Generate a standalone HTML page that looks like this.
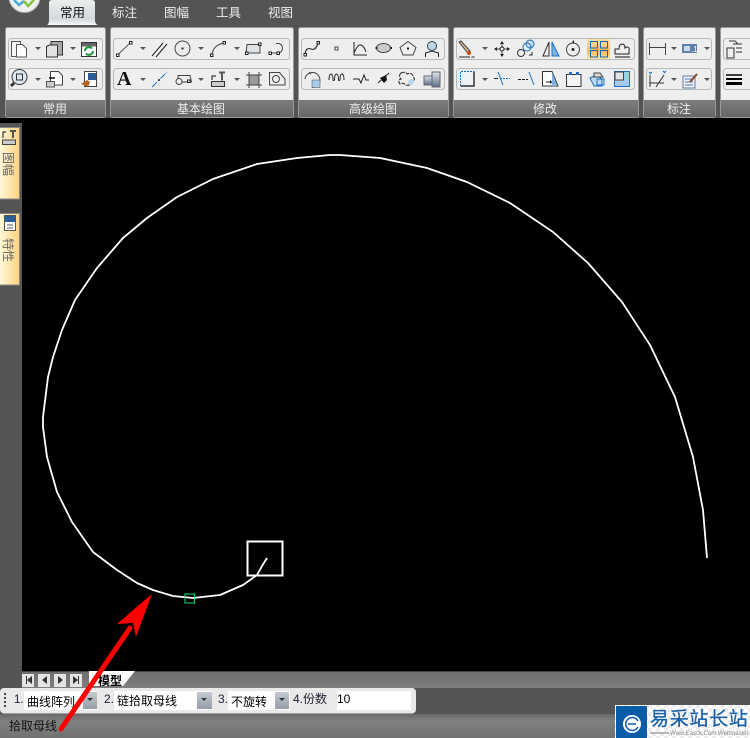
<!DOCTYPE html>
<html><head><meta charset="utf-8"><style>
html,body{margin:0;padding:0;background:#000}
svg{display:block}
text{font-family:"Liberation Sans","WenQuanYi Zen Hei","Noto Sans CJK SC",sans-serif}
.g{fill:#eee;stroke:#b4bab8;stroke-width:1}
.n{fill:#555}
</style></head><body>
<svg width="750" height="738" viewBox="0 0 750 738" xmlns="http://www.w3.org/2000/svg">
<defs>
<linearGradient id="foot" x1="0" y1="0" x2="0" y2="1"><stop offset="0" stop-color="#7d7d7d"/><stop offset="1" stop-color="#666"/></linearGradient>
<linearGradient id="stat" x1="0" y1="0" x2="0" y2="1"><stop offset="0" stop-color="#6a6a6a"/><stop offset=".3" stop-color="#808080"/><stop offset="1" stop-color="#727272"/></linearGradient>
<linearGradient id="tab" x1="0" y1="0" x2="0" y2="1"><stop offset="0" stop-color="#eceeee"/><stop offset=".75" stop-color="#d4d9dc"/><stop offset="1" stop-color="#f6f6f6"/></linearGradient>
<linearGradient id="side" x1="0" y1="0" x2="1" y2="0"><stop offset="0" stop-color="#fff8d8"/><stop offset="1" stop-color="#fdd27e"/></linearGradient>
<linearGradient id="hot" x1="0" y1="0" x2="0" y2="1"><stop offset="0" stop-color="#fde0a6"/><stop offset=".6" stop-color="#fcb858"/><stop offset="1" stop-color="#fde79c"/></linearGradient>
<linearGradient id="dd" x1="0" y1="0" x2="0" y2="1"><stop offset="0" stop-color="#c4c9d2"/><stop offset="1" stop-color="#969da8"/></linearGradient>
<linearGradient id="tabbar" x1="0" y1="0" x2="0" y2="1"><stop offset="0" stop-color="#6e6e6e"/><stop offset="1" stop-color="#7e7e7e"/></linearGradient>
<linearGradient id="cyl" x1="0" y1="0" x2="0" y2="1"><stop offset="0" stop-color="#dde3ea"/><stop offset="1" stop-color="#5f6f88"/></linearGradient>
<pattern id="chk" width="8" height="8" patternUnits="userSpaceOnUse"><rect width="8" height="8" fill="#fff"/><rect width="4" height="4" fill="#ececec"/><rect x="4" y="4" width="4" height="4" fill="#ececec"/></pattern>
</defs>

<!-- top -->
<rect width="750" height="123" fill="#545454"/>
<rect x="0" y="118" width="750" height="5" fill="#000"/>
<rect x="0" y="123" width="22" height="565" fill="#555"/>

<!-- logo -->
<circle cx="24.500" cy="-3" r="15.500" fill="#eef0ee" stroke="#aaa"/>
<path d="M14 0 L19 5 L24 1" fill="none" stroke="#4aa8d8" stroke-width="2.500"/>
<path d="M24 1 L28 6 L34 0" fill="none" stroke="#86c440" stroke-width="2.500"/>

<!-- tabs -->
<path d="M47 25 Q49 24 49 20 L49 3 Q49 0 52 0 L92 0 Q95 0 95 3 L95 20 Q95 24 98 25Z" fill="url(#tab)"/>
<g font-size="12.500">
<text x="60" y="17" fill="#111">常用</text>
<text x="112" y="17" fill="#eee">标注</text>
<text x="164" y="17" fill="#eee">图幅</text>
<text x="216" y="17" fill="#eee">工具</text>
<text x="268" y="17" fill="#eee">视图</text>
</g>

<!-- panels -->
<g>
<rect x="5.500" y="27.500" width="100" height="90" rx="2" fill="#eee" stroke="#999"/>
<rect x="6" y="100" width="99" height="17" fill="url(#foot)"/>
<rect x="110.500" y="27.500" width="183" height="90" rx="2" fill="#eee" stroke="#999"/>
<rect x="111" y="100" width="182" height="17" fill="url(#foot)"/>
<rect x="298.500" y="27.500" width="150" height="90" rx="2" fill="#eee" stroke="#999"/>
<rect x="299" y="100" width="149" height="17" fill="url(#foot)"/>
<rect x="453.500" y="27.500" width="185" height="90" rx="2" fill="#eee" stroke="#999"/>
<rect x="454" y="100" width="184" height="17" fill="url(#foot)"/>
<rect x="643.500" y="27.500" width="72" height="90" rx="2" fill="#eee" stroke="#999"/>
<rect x="644" y="100" width="71" height="17" fill="url(#foot)"/>
<rect x="720.500" y="27.500" width="40" height="90" rx="2" fill="#eee" stroke="#999"/>
<rect x="721" y="100" width="40" height="17" fill="url(#foot)"/>
</g>
<g font-size="12" fill="#eee" text-anchor="middle">
<text x="55" y="113">常用</text>
<text x="201" y="113">基本绘图</text>
<text x="373" y="113">高级绘图</text>
<text x="545" y="113">修改</text>
<text x="679" y="113">标注</text>
</g>

<!-- button groups -->
<rect class="g" x="8.500" y="38.500" width="94" height="21" rx="3"/>
<rect class="g" x="8.500" y="68.500" width="94" height="21" rx="3"/>
<rect class="g" x="113.500" y="38.500" width="176" height="21" rx="3"/>
<rect class="g" x="113.500" y="68.500" width="176" height="21" rx="3"/>
<rect class="g" x="301.500" y="38.500" width="143" height="21" rx="3"/>
<rect class="g" x="301.500" y="68.500" width="143" height="21" rx="3"/>
<rect class="g" x="456.500" y="38.500" width="178" height="21" rx="3"/>
<rect class="g" x="456.500" y="68.500" width="178" height="21" rx="3"/>
<rect class="g" x="646.500" y="38.500" width="65" height="21" rx="3"/>
<rect class="g" x="646.500" y="68.500" width="65" height="21" rx="3"/>
<rect class="g" x="723.500" y="38.500" width="40" height="21" rx="3"/>
<rect class="g" x="723.500" y="68.500" width="40" height="21" rx="3"/>

<!-- dropdown arrows -->
<g class="n">
<path d="M35 47h6l-3 3z"/><path d="M70 47h6l-3 3z"/>
<path d="M35 78h6l-3 3z"/><path d="M70 78h6l-3 3z"/>
<path d="M140 47h6l-3 3z"/><path d="M198 47h6l-3 3z"/><path d="M234 47h6l-3 3z"/>
<path d="M140 78h6l-3 3z"/><path d="M198 78h6l-3 3z"/><path d="M234 78h6l-3 3z"/>
<path d="M482 47h6l-3 3z"/><path d="M482 78h6l-3 3z"/>
<path d="M671 47h6l-3 3z"/><path d="M704 47h6l-3 3z"/>
<path d="M671 78h6l-3 3z"/><path d="M704 78h6l-3 3z"/>
</g>

<!-- group 1 icons -->
<path d="M11.500 41.500h9v15h-9z" fill="#f4f4f4" stroke="#555"/><path d="M16.500 44.500h6l4 4v8.500h-10z" fill="#fff" stroke="#555"/>
<path d="M46.500 46.500l4-2h7v12.500h-11z" fill="#e2e2e2" stroke="#333"/><path d="M51 41.500h11.500v13.500h-5v-10h-6.500z" fill="#a8a8a8" stroke="#333"/>
<rect x="81.500" y="42.500" width="15" height="14" fill="#fff" stroke="#333"/><rect x="82" y="43" width="14" height="3.500" fill="#666"/><path d="M85 51a4 4 0 0 1 7-2.500M93 51a4 4 0 0 1-7 2.500" fill="none" stroke="#1e9a3c" stroke-width="2"/>
<circle cx="19.500" cy="77" r="7.500" fill="#dfe8ee" stroke="#333"/><rect x="16.500" y="74" width="6" height="6" fill="none" stroke="#333"/><path d="M14 83l-3 3" stroke="#333" stroke-width="3"/>
<path d="M50.500 71.500h8l4 4v9.500h-12z" fill="#fff" stroke="#444"/><rect x="46.500" y="81.500" width="8" height="5.500" fill="#ccc" stroke="#555"/><path d="M49 78h6" stroke="#111" stroke-width="1.500"/>
<rect x="84.500" y="71.500" width="12" height="15" fill="#fff" stroke="#444"/><rect x="88" y="73" width="8" height="7" fill="#2b5c9c"/><path d="M81 84l6-4 3 2-2 5z" fill="#b4641c"/>

<!-- group 2 row 1 -->
<path d="M118 54.500L130 43" stroke="#555" fill="none"/><rect x="116.500" y="54" width="2.500" height="2.500" fill="#fff" stroke="#222"/><rect x="129.500" y="41.500" width="2.500" height="2.500" fill="#fff" stroke="#222"/>
<path d="M152 56L163 43M156 57L167 44" stroke="#222" fill="none"/>
<circle cx="182.500" cy="48.500" r="7.500" fill="#eee" stroke="#444"/><rect x="181.500" y="47.500" width="2" height="2" fill="#222"/>
<path d="M212 55Q213 45 224 43" stroke="#444" fill="none"/><rect x="210.500" y="54" width="2.500" height="2.500" fill="#fff" stroke="#222"/><rect x="223" y="41.500" width="2.500" height="2.500" fill="#fff" stroke="#222"/>
<path d="M247 44.500h13v8.500h-14z" fill="#dfe3e6" stroke="#444"/><rect x="258.500" y="43" width="2.500" height="2.500" fill="#fff" stroke="#222"/><rect x="245.500" y="52" width="2.500" height="2.500" fill="#fff" stroke="#222"/>
<path d="M270 53h9a5 5 0 0 0 0-9.500h-3" fill="none" stroke="#444"/><rect x="269" y="52" width="2.500" height="2.500" fill="#fff" stroke="#222"/><rect x="277" y="52" width="2.500" height="2.500" fill="#fff" stroke="#222"/>
<!-- row 2 -->
<text x="117" y="85" font-size="20" font-weight="bold" fill="#111" style="font-family:'Liberation Serif',serif">A</text>
<path d="M152 87L167 72" stroke="#1a6fc0" fill="none" stroke-dasharray="7 1.500 2 1.500"/><circle cx="159" cy="80" r="1" fill="#222"/>
<path d="M178 75.500h12l1.500 6.500h-13z" fill="#eee" stroke="#444"/><circle cx="179" cy="81.500" r="3" fill="#eee" stroke="#444"/><rect x="187.500" y="80" width="2.500" height="2.500" fill="#fff" stroke="#222"/>
<rect x="211.500" y="81.500" width="13" height="5" fill="#ccc" stroke="#333"/><path d="M212 80v-4h4" fill="none" stroke="#111"/><path d="M219 72.500h6M222 72.500v8" stroke="#555" stroke-width="2"/>
<rect x="249" y="75" width="10" height="10" fill="#999" stroke="#333"/><path d="M246 75h16M246 85h16M249 72v16M259 72v16" stroke="#444" fill="none"/>
<path d="M269.500 72.500h10l5.500 6.500v6h-15.500z" fill="#eee" stroke="#444"/><circle cx="276" cy="79" r="3.500" fill="none" stroke="#444"/>

<!-- group 3 -->
<path d="M305 54Q306 47 311 49T318 43" fill="none" stroke="#333" stroke-width="1.200"/><rect x="304" y="53.500" width="2.500" height="2.500" fill="#fff" stroke="#222"/><rect x="317" y="41.500" width="2.500" height="2.500" fill="#fff" stroke="#222"/>
<rect x="335" y="47" width="3" height="3" fill="#fff" stroke="#444"/>
<path d="M354 42v13h13M354 53q4-9 7-8t5 7" fill="none" stroke="#222"/>
<ellipse cx="383.500" cy="48" rx="7" ry="4.500" fill="#ccc" stroke="#444"/><rect x="375.500" y="47" width="2" height="2" fill="#222"/><rect x="390" y="47" width="2" height="2" fill="#222"/>
<path d="M408 41.500L416 47.500L413 55L403 55L400 47.500Z" fill="#eee" stroke="#444"/><rect x="407" y="47.500" width="2" height="2" fill="#222"/>
<circle cx="432" cy="46" r="4.500" fill="#b8d8ee" stroke="#444"/><path d="M425.500 57v-4l6.500-2 6.500 2v4" fill="none" stroke="#222"/>
<path d="M305 79a7.500 7.500 0 1 1 7.500 8.500" fill="none" stroke="#444"/><rect x="312" y="80" width="8" height="7.500" fill="#a8cce8" stroke="#444" stroke-width=".5"/><path d="M309 72l2 2" stroke="#444"/>
<path d="M329 80q0-6 2-6t2 6q0 1 1.500 0q0-6 2-6t2 6q0 1 1.500 0q0-6 2-6t2 6" fill="none" stroke="#222"/>
<path d="M353 79h6l2 4 3-8 2 5h3" fill="none" stroke="#222"/>
<path d="M378 83l11-10" stroke="#222"/><path d="M380 78l6-3 1 5-3 3z" fill="#111"/>
<path d="M401 73q4-2 6 1q5-2 6 2q3 4-1 6q-1 4-6 3q-3-3-6-1q-3-4 1-5q-3-3 0-6z" fill="none" stroke="#222" stroke-dasharray="4 1"/><circle cx="411" cy="82" r="3" fill="#b8d8ee"/>
<rect x="424" y="76" width="8" height="9" fill="url(#cyl)" stroke="#667"/><rect x="432" y="72" width="8" height="15" fill="url(#cyl)" stroke="#667"/>

<!-- group 4 -->
<path d="M459 42l2-1 9 10 -1.500 3z" fill="#d4b890" stroke="#444"/><circle cx="469" cy="53" r="2" fill="#c84a10"/><path d="M459 57h11M471.500 57h3" stroke="#222"/>
<path d="M502 42v14M495 49h14" stroke="#444" fill="none"/><path d="M500 44l2-3 2 3zM500 54l2 3 2-3zM497 47l-3 2 3 2zM507 47l3 2-3 2z" fill="#222"/><circle cx="502" cy="49" r="2" fill="#eee" stroke="#222"/>
<circle cx="530" cy="44" r="4" fill="#cde" stroke="#1a6fc0"/><circle cx="527" cy="47" r="4" fill="none" stroke="#1a6fc0"/><circle cx="521" cy="53" r="3.500" fill="#eee" stroke="#333"/><path d="M529 55h3v-3" fill="none" stroke="#222"/>
<path d="M549 42v14h-6z" fill="none" stroke="#333"/><path d="M552 42v14h7z" fill="#7fb4e2" stroke="#1a6fc0"/>
<circle cx="573" cy="49.500" r="6.500" fill="#eee" stroke="#444"/><circle cx="573" cy="49.500" r="1.500" fill="#222"/><path d="M572 42l2-2v4z" fill="#222"/>
<rect x="587" y="39" width="23" height="20" fill="url(#hot)"/><g fill="none" stroke="#1565b8"><rect x="590.500" y="41.500" width="7" height="6.500"/><rect x="600.500" y="41.500" width="7" height="6.500"/><rect x="590.500" y="50.500" width="7" height="6.500"/><rect x="600.500" y="50.500" width="7" height="6.500"/></g>
<path d="M615 54h14v-3q1-4-2-4-1 0-2 1 0-4-3-4t-3 5h-4z" fill="#eee" stroke="#222"/><path d="M615 57h15" stroke="#111"/>

<path d="M460.500 71.500h13.500v14.500h-13.500z" fill="#eef2f4"/><path d="M474 71.500v14.500h-13.500" fill="none" stroke="#333" stroke-width="1.500"/><path d="M460.500 86V71.500H474" fill="none" stroke="#1a6fc0" stroke-dasharray="2 1"/>
<path d="M494 78.500h4" stroke="#222"/><path d="M500 78.500h10" stroke="#1a6fc0" stroke-dasharray="2 1"/><path d="M498 72l5 13" stroke="#1a6fc0" fill="none"/>
<path d="M518 79.500h10" stroke="#222" stroke-dasharray="3 1"/><path d="M529 72l5 13" stroke="#1a6fc0"/>
<path d="M542.500 71.500h9.500l6 14.500h-15.500z" fill="#fff" stroke="#333"/><path d="M552 72l5.500 14h-5.500z" fill="#7fb4e2"/><path d="M546 82h6" stroke="#111"/><path d="M550 80l2 2-2 2z" fill="#111"/>
<rect x="566.500" y="74.500" width="14.500" height="12" fill="#f4f4f4" stroke="#333"/><rect x="569" y="72" width="3" height="3" fill="#1a6fc0"/><rect x="576" y="72" width="3" height="3" fill="#1a6fc0"/>
<path d="M590 78l4-2h4l4 3v7h-8z" fill="#bcd8ee" stroke="#1a6fc0"/><path d="M594 73h6l3 4h-9z" fill="#ddd" stroke="#444"/><rect x="597" y="79" width="7" height="6" fill="none" stroke="#1a6fc0"/>
<rect x="614.500" y="71.500" width="15" height="15" fill="#a8cce8" stroke="#1a6fc0"/><rect x="615" y="72" width="8.500" height="8" fill="#e4e4e4" stroke="#444"/>

<!-- group 5 -->
<path d="M649.500 43v12M665.500 43v12M650 47.500h15" stroke="#444" fill="none"/>
<rect x="682" y="44" width="15" height="9" fill="#5f7fa8"/><rect x="684" y="46" width="6" height="5" fill="#cdd8e8"/><text x="691" y="52" font-size="8" fill="#fff">.1</text>
<path d="M650 87V75M656 87l8-12M649 83h15" fill="none" stroke="#333"/><path d="M649 72l2 2M652 72l-2 2M663 71l2 2M666 71l-2 2" stroke="#1a6fc0"/>
<rect x="683" y="76" width="12" height="12" fill="#eef" stroke="#5f7f9f"/><path d="M685 79h8M685 82h8M685 85h8" stroke="#5f7f9f"/><path d="M690 82l7-8" stroke="#8a4a20" stroke-width="2"/>

<!-- group 6 -->
<rect x="727" y="48" width="7" height="10" fill="#eee" stroke="#333"/><path d="M733 44h9M736 48h6M736 52h6M729 41h6l3 3" stroke="#333" fill="none"/>
<path d="M726 75h16" stroke="#000" stroke-width="1.500"/><path d="M726 79h16" stroke="#000" stroke-width="2"/><path d="M726 83.500h16" stroke="#000" stroke-width="3"/>

<!-- side tabs -->
<rect x="0" y="127" width="19.500" height="72" fill="url(#side)"/><path d="M0 127.500h19.500v71.500H0" fill="none" stroke="#888"/>
<rect x="0" y="213" width="19.500" height="72" fill="url(#side)"/><path d="M0 213.500h19.500v71.500H0" fill="none" stroke="#888"/>
<rect x="2.500" y="140" width="13" height="4.500" fill="#ccc" stroke="#444"/><path d="M3 138v-6h3" fill="none" stroke="#111"/><path d="M10 131h6M13 131v7" stroke="#555" stroke-width="2"/>
<rect x="4.500" y="215.500" width="11" height="15" fill="#fff" stroke="#555"/><rect x="5" y="216" width="10" height="6" fill="#2b5c9c"/><path d="M7 225h6M7 228h6" stroke="#555"/>
<text font-size="12" fill="#666" transform="translate(4,152) rotate(90)">图幅</text>
<text font-size="12" fill="#666" transform="translate(4,238) rotate(90)">特性</text>

<!-- curve -->
<path d="M707 558 L703 510 L693 457 L675 397 L650 345 L622 302 L588 263 L553 232 L510 203 L467 182 L427 168 L380 158 L340 155 L330 155 L297 158 L257 164 L213 179 L177 197 L147 218 L123 238 L97 268 L75 300 L62 330 L53 357 L48 377 L46 393 L43 417 L43 427 L47 457 L57 492 L72 522 L93 552 L117 570 L137 583 L153 590 L173 596 L193 598 L220 595 L243 585 L257 575 L262 566 L267 558" fill="none" stroke="#fff" stroke-width="1.800" stroke-linejoin="round"/>
<rect x="247.500" y="541.500" width="35" height="34" fill="none" stroke="#fff" stroke-width="2"/>
<rect x="185" y="594" width="9.500" height="9" fill="none" stroke="#1fe07a" stroke-width="1"/>

<!-- tab bar -->
<rect x="22" y="671" width="728" height="17" fill="url(#tabbar)"/>
<rect x="22" y="671" width="728" height="1" fill="#444"/>
<g fill="#e4e4e4">
<rect x="22" y="674" width="12" height="13"/><rect x="38" y="674" width="12" height="13"/><rect x="54" y="674" width="12" height="13"/><rect x="70" y="674" width="12" height="13"/>
</g>
<g fill="#333">
<path d="M26 676v8h1v-8zM32 676l-5 4 5 4z"/><path d="M47 676l-5 4 5 4z"/><path d="M58 676l5 4-5 4z"/><path d="M73 676l5 4-5 4zM78 676h1v8h-1z"/>
</g>
<path d="M89 671h46l-12 15h-34z" fill="#fff"/>
<text x="98" y="685" font-size="12" font-weight="bold" fill="#000">模型</text>

<!-- command bar -->
<rect x="0" y="688" width="750" height="26" fill="#555"/>
<rect x="0" y="688" width="416" height="25.500" rx="4" fill="#e9e9e9"/>
<g fill="#444"><rect x="4" y="693" width="2" height="2"/><rect x="4" y="697" width="2" height="2"/><rect x="4" y="701" width="2" height="2"/><rect x="4" y="705" width="2" height="2"/></g>
<rect x="24" y="691" width="73" height="19" fill="#fff"/>
<rect x="83" y="692" width="14" height="17" fill="url(#dd)"/>
<rect x="114" y="691" width="98" height="19" fill="#fff"/>
<rect x="197" y="692" width="15" height="17" fill="url(#dd)"/>
<rect x="228" y="691" width="62" height="19" fill="#fff"/>
<rect x="275" y="692" width="14" height="17" fill="url(#dd)"/>
<rect x="337" y="691" width="74" height="19" fill="#fff"/>
<g fill="#333"><path d="M87 698h6l-3 3z"/><path d="M201 698h6l-3 3z"/><path d="M279 698h6l-3 3z"/></g>
<g font-size="12" fill="#223">
<text x="14" y="703" font-size="11.500">1.</text>
<text x="104" y="703">2.</text>
<text x="218" y="703">3.</text>
<text x="293" y="703">4.份数</text>
</g>
<g font-size="12" fill="#000">
<text x="27" y="706">曲线阵列</text>
<text x="117" y="705">链拾取母线</text>
<text x="231" y="706">不旋转</text>
<text x="337" y="703">10</text>
</g>

<!-- status -->
<rect x="0" y="714" width="750" height="24" fill="url(#stat)"/>
<text x="9" y="730" font-size="12" fill="#111">拾取母线</text>

<!-- watermark -->
<rect x="615" y="705" width="135" height="33" fill="url(#chk)"/>
<rect x="616" y="706" width="31" height="32" fill="#0a5ba8"/>
<circle cx="632" cy="724" r="9" fill="#fff"/>
<path d="M638 721a6.500 6.500 0 1 0 0 6" fill="none" stroke="#0a5ba8" stroke-width="1.500"/>
<path d="M628 724h8" stroke="#0a5ba8" stroke-width="1.500"/>
<text x="650" y="725" font-size="19" fill="#1560a8" letter-spacing=".7" stroke="#1560a8" stroke-width=".25">易采站长站</text>
<path d="M650 733h19" stroke="#777"/>
<text x="670" y="735" font-size="6" fill="#888">Www.Easck.Com Webmaster</text>

<!-- red arrow -->
<path d="M61 729L130 628" stroke="#f00" stroke-width="5" stroke-linecap="round" fill="none"/>
<path d="M152 594L117 624L133 623L136 637Z" fill="#f00"/>
</svg>
</body></html>
